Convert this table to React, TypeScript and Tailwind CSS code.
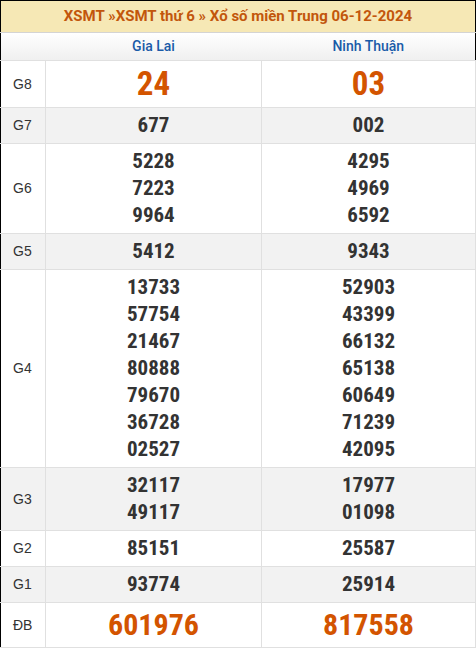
import React from 'react';

type Prize = {
  label: string;
  left: string[];
  right: string[];
  kind?: 'big' | 'special';
};

const prizes: Prize[] = [
  { label: 'G8', left: ['24'], right: ['03'], kind: 'big' },
  { label: 'G7', left: ['677'], right: ['002'] },
  { label: 'G6', left: ['5228', '7223', '9964'], right: ['4295', '4969', '6592'] },
  { label: 'G5', left: ['5412'], right: ['9343'] },
  {
    label: 'G4',
    left: ['13733', '57754', '21467', '80888', '79670', '36728', '02527'],
    right: ['52903', '43399', '66132', '65138', '60649', '71239', '42095'],
  },
  { label: 'G3', left: ['32117', '49117'], right: ['17977', '01098'] },
  { label: 'G2', left: ['85151'], right: ['25587'] },
  { label: 'G1', left: ['93774'], right: ['25914'] },
  { label: 'ĐB', left: ['601976'], right: ['817558'], kind: 'special' },
];

const numFont = { fontFamily: '"Roboto Condensed", Roboto, "Liberation Sans", sans-serif' };

const NumberCell: React.FC<{ values: string[]; kind?: Prize['kind'] }> = ({ values, kind }) => {
  let cls = 'text-[21px] leading-[27px] text-[#333]';
  if (kind === 'big') cls = 'text-[33px] leading-[38px] text-[#d35400]';
  if (kind === 'special') cls = 'text-[30px] leading-[36px] text-[#d35400]';
  return (
    <td className="border border-[#e0e0e0] py-1 text-center font-bold" style={numFont}>
      {values.map((v) => (
        <div key={v} className={cls}>
          {v}
        </div>
      ))}
    </td>
  );
};

export default function App() {
  return (
    <div className="w-[476px] h-[648px] bg-white" style={{ fontFamily: 'Roboto, "Liberation Sans", Arial, sans-serif' }}>
      <table className="w-full border-collapse table-fixed border border-black">
        <colgroup>
          <col className="w-[45px]" />
          <col className="w-[216px]" />
          <col />
        </colgroup>
        <thead>
          <tr>
            <th
              colSpan={3}
              className="bg-[#f6e8b5] border-b border-[#d4d4d4] py-1 leading-[23px] text-[15px] font-bold text-[#c2560c] text-center"
            >
              XSMT »XSMT thứ 6 » Xổ số miền Trung 06-12-2024
            </th>
          </tr>
          <tr className="bg-gradient-to-b from-white to-[#efefef]">
            <th className="border-b border-[#e0e0e0] py-1 leading-[19px]"></th>
            <th className="border-b border-[#e0e0e0] py-1 leading-[19px] text-[14px] font-medium text-[#1a5ba8]">
              Gia Lai
            </th>
            <th className="border-b border-[#e0e0e0] py-1 leading-[19px] text-[14px] font-medium text-[#1a5ba8]">
              Ninh Thuận
            </th>
          </tr>
        </thead>
        <tbody>
          {prizes.map((p, i) => (
            <tr key={p.label} className={i % 2 === 1 ? 'bg-[#f2f2f2]' : 'bg-white'}>
              <td
                className="border border-[#e0e0e0] border-l-black py-1 pl-[12px] text-[14px] text-[#333]"
                style={{ fontFamily: '"Liberation Sans", Arial, sans-serif' }}
              >
                {p.label}
              </td>
              <NumberCell values={p.left} kind={p.kind} />
              <NumberCell values={p.right} kind={p.kind} />
            </tr>
          ))}
        </tbody>
      </table>
    </div>
  );
}
